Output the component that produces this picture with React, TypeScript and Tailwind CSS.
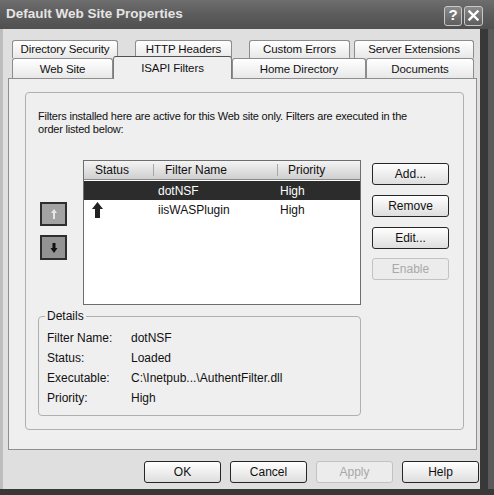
import React from "react";

type BtnProps = { children: React.ReactNode; disabled?: boolean; className?: string };

function Btn({ children, disabled, className = "" }: BtnProps) {
  return (
    <div
      className={`h-[22px] w-[77px] flex items-center justify-center rounded-[3px] border text-[12px] ${
        disabled
          ? "border-[#c2c2c2] text-[#a8a8a8] bg-[#ececec]"
          : "border-[#262626] text-[#111] bg-gradient-to-b from-[#ffffff] to-[#dedede]"
      } ${className}`}
    >
      {children}
    </div>
  );
}

function Tab({ label, className = "" }: { label: string; className?: string }) {
  return (
    <div
      className={`flex items-center justify-center border border-b-0 border-[#8c8c8c] rounded-t-[3px] bg-gradient-to-b from-[#ffffff] to-[#e8e8e8] text-[11.5px] tracking-[-0.1px] text-[#111] whitespace-nowrap ${className}`}
    >
      {label}
    </div>
  );
}

export default function App() {
  return (
    <div className="w-[494px] h-[495px] flex flex-col bg-[#dfdfdf] overflow-hidden font-['Liberation_Sans',Arial,sans-serif] text-[#111]">
      {/* Title bar */}
      <div className="h-[29px] flex items-center bg-gradient-to-b from-[#6e6e6e] via-[#5c5c5c] to-[#505050]">
        <div className="pl-[6px] text-[13.5px] font-bold text-[#e4e4e4]">
          Default Web Site Properties
        </div>
        <div className="ml-auto flex gap-[2px] pr-[11px] pt-[2px]">
          <div className="w-[18px] h-[20px] rounded-[3px] border border-[#c8c8c8] bg-gradient-to-b from-[#8a8a8a] to-[#5e5e5e] flex items-center justify-center text-[15px] font-bold text-white">
            ?
          </div>
          <div className="w-[19px] h-[20px] rounded-[3px] border border-[#c8c8c8] bg-gradient-to-b from-[#8a8a8a] to-[#5e5e5e] flex items-center justify-center">
            <svg width="11" height="11" viewBox="0 0 11 11">
              <path d="M1.5 1.5 L9.5 9.5 M9.5 1.5 L1.5 9.5" stroke="#fff" strokeWidth="2.4" strokeLinecap="square" />
            </svg>
          </div>
        </div>
      </div>

      <div className="flex flex-1">
        <div className="w-[3px] bg-[#bdbdbd]" />
        <div className="w-[477px] flex flex-col">
          {/* Tabs */}
          <div className="mt-[11px] ml-[5px] w-[469px] h-[38px] flex flex-col">
            <div className="h-[18px] flex">
              <Tab label="Directory Security" className="ml-[4px] w-[106px] h-[18px]" />
              <Tab label="HTTP Headers" className="ml-[17px] w-[97px] h-[18px]" />
              <Tab label="Custom Errors" className="ml-[17px] w-[101px] h-[18px]" />
              <Tab label="Server Extensions" className="ml-[4px] w-[120px] h-[18px]" />
            </div>
            <div className="h-[20px] flex items-end">
              <Tab label="Web Site" className="ml-[4px] w-[101px] h-[20px] pt-[2px]" />
              <div className="relative z-10 w-[119px] h-[23px] mb-[-1px] flex justify-center pt-[3px] border border-b-0 border-[#7a7a7a] border-t-[#505050] rounded-t-[3px] bg-[#efefef] text-[11.5px] tracking-[-0.1px] whitespace-nowrap">
                ISAPI Filters
              </div>
              <Tab label="Home Directory" className="w-[134px] h-[20px] pt-[2px]" />
              <Tab label="Documents" className="w-[108px] h-[20px] pt-[2px]" />
            </div>
          </div>

          {/* Panel */}
          <div className="ml-[5px] w-[469px] h-[372px] border border-[#8e8e8e] bg-[#efefef]">
            <div className="ml-[16px] mt-[13px] w-[439px] h-[338px] border border-[#b0b0b0] rounded-[4px] flex flex-col">
              <div className="mt-[17px] ml-[12px] text-[11px] leading-[13px] tracking-[-0.2px] whitespace-nowrap">
                <div>Filters installed here are active for this Web site only. Filters are executed in the</div>
                <div>order listed below:</div>
              </div>

              <div className="mt-[24px] ml-[14px] flex">
                {/* Up / down */}
                <div className="w-[27px] flex flex-col">
                  <div className="mt-[42px] h-[24px] border-2 border-[#2e2e2e] bg-[#a3a3a3] flex items-center justify-center">
                    <svg width="8" height="12" viewBox="0 0 8 12">
                      <path d="M4 1 L7 5 L5 5 L5 11 L3 11 L3 5 L1 5 Z" fill="#e6e6e6" />
                    </svg>
                  </div>
                  <div className="mt-[9px] h-[25px] border-2 border-[#2e2e2e] bg-[#939393] flex items-center justify-center">
                    <svg width="8" height="12" viewBox="0 0 8 12">
                      <path d="M2.5 1 L5.5 1 L5.5 6 L7.5 6 L4 11 L0.5 6 L2.5 6 Z" fill="#111" />
                    </svg>
                  </div>
                </div>

                {/* List */}
                <div className="ml-[16px] w-[278px] h-[145px] border border-[#6e6e6e] bg-white flex flex-col text-[12px]">
                  <div className="h-[19px] flex items-center border-b border-[#8a8a8a] bg-gradient-to-b from-[#f4f4f4] to-[#cfcfcf]">
                    <div className="w-[70px] h-full flex items-center pl-[11px] relative">
                      Status
                      <div className="absolute right-0 top-[3px] h-[12px] w-[1px] bg-[#a8a8a8]" />
                    </div>
                    <div className="w-[124px] h-full flex items-center pl-[11px] relative">
                      Filter Name
                      <div className="absolute right-0 top-[3px] h-[12px] w-[1px] bg-[#a8a8a8]" />
                    </div>
                    <div className="flex-1 h-full flex items-center pl-[10px]">Priority</div>
                  </div>
                  <div className="mt-[1px] h-[19px] flex items-center bg-[#2c2c2c] text-white">
                    <div className="w-[74px]" />
                    <div className="w-[122px]">dotNSF</div>
                    <div>High</div>
                  </div>
                  <div className="h-[19px] flex items-center">
                    <div className="w-[74px] pl-[8px] flex items-center">
                      <svg width="11" height="16" viewBox="0 0 11 16">
                        <path d="M5.5 0 L11 7 L8 7 L8 16 L3 16 L3 7 L0 7 Z" fill="#222" />
                      </svg>
                    </div>
                    <div className="w-[122px]">iisWASPlugin</div>
                    <div>High</div>
                  </div>
                </div>

                {/* Right buttons */}
                <div className="ml-[11px] flex flex-col">
                  <Btn className="mt-[3px]">Add...</Btn>
                  <Btn className="mt-[10px]">Remove</Btn>
                  <Btn className="mt-[10px]">Edit...</Btn>
                  <Btn className="mt-[9px]" disabled>
                    Enable
                  </Btn>
                </div>
              </div>

              {/* Details */}
              <fieldset className="mt-[5px] ml-[12px] w-[323px] border border-[#b0b0b0] rounded-[4px] text-[12px]">
                <legend className="ml-[6px] px-[2px] leading-[13px]">Details</legend>
                <div className="pt-[5px] pb-[7px]">
                  {[
                    ["Filter Name:", "dotNSF"],
                    ["Status:", "Loaded"],
                    ["Executable:", "C:\\Inetpub...\\AuthentFilter.dll"],
                    ["Priority:", "High"],
                  ].map(([k, v]) => (
                    <div key={k} className="h-[20px] flex items-center pl-[8px]">
                      <div className="w-[84px]">{k}</div>
                      <div>{v}</div>
                    </div>
                  ))}
                </div>
              </fieldset>
            </div>
          </div>

          {/* Bottom buttons */}
          <div className="mt-[11px] flex justify-end gap-[9px] pr-[1px]">
            <Btn>OK</Btn>
            <Btn>Cancel</Btn>
            <Btn disabled>Apply</Btn>
            <Btn>Help</Btn>
          </div>
        </div>
        <div className="w-[8px] bg-[#383838]" />
        <div className="w-[6px] bg-[#5a5a5a]" />
      </div>
      <div className="h-[6px] bg-[#383838]" />
    </div>
  );
}
